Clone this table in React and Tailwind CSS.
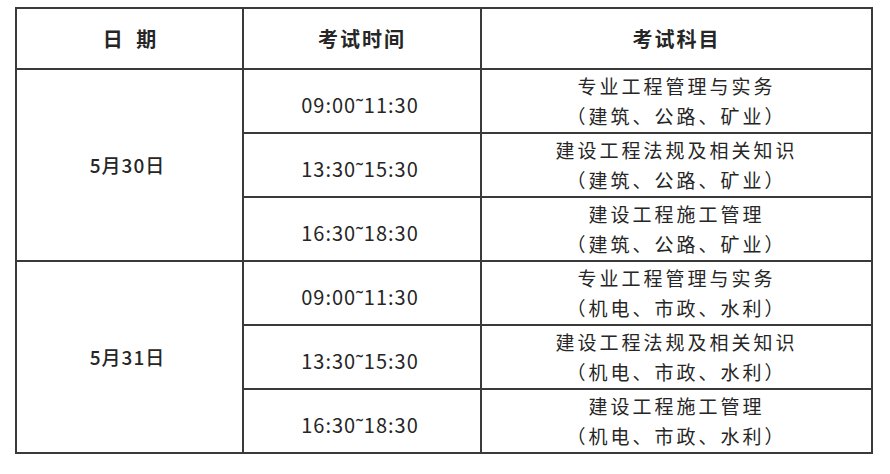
import React from 'react';

const days = [
  {
    date: '5月30日',
    scope: '（建筑、公路、矿业）',
  },
  {
    date: '5月31日',
    scope: '（机电、市政、水利）',
  },
];

const sessions = [
  { time: '09:00˜11:30', subject: '专业工程管理与实务' },
  { time: '13:30˜15:30', subject: '建设工程法规及相关知识' },
  { time: '16:30˜18:30', subject: '建设工程施工管理' },
];

const cell = 'border-2 border-[#3a3a3a] text-center align-middle p-0';

const App = () => {
  return (
    <div
      className="w-[890px] h-[474px] bg-white pl-[15px] pt-[7px] text-[#262626]"
      style={{ fontFamily: '"Noto Sans CJK SC", "Liberation Sans", sans-serif' }}
    >
      <table className="border-collapse table-fixed w-[856px]">
        <colgroup>
          <col className="w-[227px]" />
          <col className="w-[238px]" />
          <col className="w-[391px]" />
        </colgroup>
        <thead>
          <tr className="h-[61px]">
            <th className={`${cell} text-[20px] font-bold`}>日&nbsp;&nbsp;&nbsp;期</th>
            <th className={`${cell} text-[20px] font-bold tracking-[2px]`}>考试时间</th>
            <th className={`${cell} text-[20px] font-bold tracking-[2px]`}>考试科目</th>
          </tr>
        </thead>
        <tbody>
          {days.map((day) =>
            sessions.map((session, index) => (
              <tr key={day.date + session.time} className="h-[64px]">
                {index === 0 && (
                  <td rowSpan={3} className={`${cell} text-[19px] font-medium tracking-[1px] pr-[4px]`}>
                    {day.date}
                  </td>
                )}
                <td className={`${cell} text-[20px] tracking-[1px] pt-[8px] pr-[4px]`}>{session.time}</td>
                <td className={`${cell} text-[19px] leading-[30px] tracking-[3px]`}>
                  <div>{session.subject}</div>
                  <div>{day.scope}</div>
                </td>
              </tr>
            ))
          )}
        </tbody>
      </table>
    </div>
  );
};

export default App;
